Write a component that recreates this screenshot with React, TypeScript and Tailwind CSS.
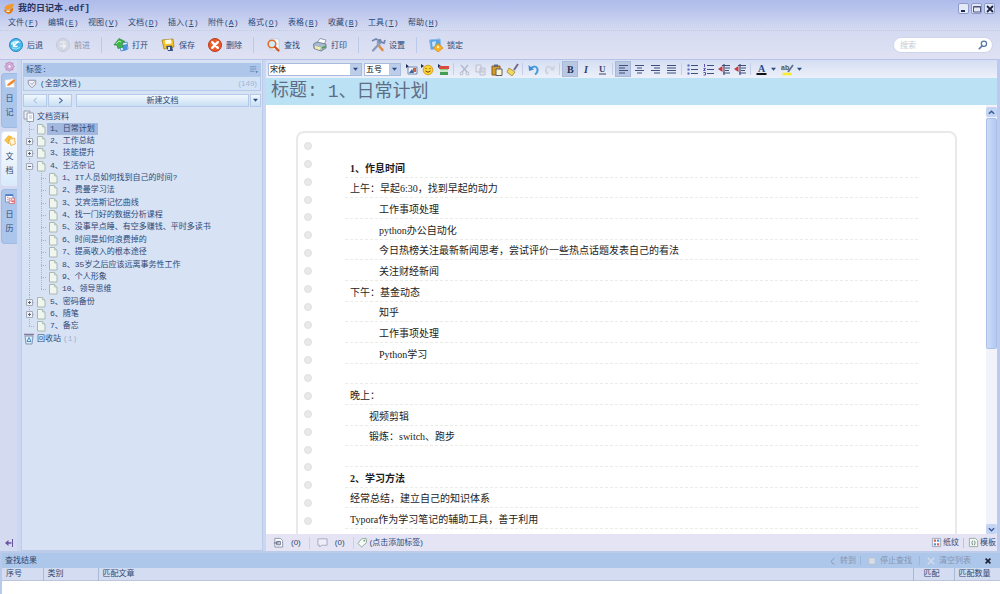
import React from "react";

type IconProps = { children: React.ReactNode; className?: string; box?: number };

function Icon({ children, className = "h-4 w-4", box = 16 }: IconProps) {
  return (
    <svg viewBox={`0 0 ${box} ${box}`} className={`shrink-0 ${className}`} fill="none" aria-hidden="true">
      {children}
    </svg>
  );
}

const menus: [string, string][] = [
  ["文件", "F"], ["编辑", "E"], ["视图", "V"], ["文档", "D"], ["插入", "I"], ["附件", "A"],
  ["格式", "O"], ["表格", "B"], ["收藏", "B"], ["工具", "T"], ["帮助", "H"],
];

function Logo() {
  return (
    <Icon className="h-3 w-3">
      <path d="M2 6 Q5 1 15 1 Q14 6 9 8 L3 9Z" fill="#f29a2e" />
      <path d="M1 9 L9 9 L13 6 Q15 10 10 14 Q4 16 1 9Z" fill="#e07a14" />
      <path d="M4 10 L10 10 L8 12 L5 12Z" fill="#fff3dc" />
    </Icon>
  );
}

const BackIcon = () => (
  <Icon>
    <circle cx="8" cy="8" r="6.5" fill="#45b8ea" stroke="#2b86c4" />
    <path d="M3 6 Q8 1 13 6 Q8 5 3 8Z" fill="#b8ecff" />
    <path d="M10.5 4 L6 8.5 M5.500 5.500 V9.500 H9.500" stroke="#fff" strokeWidth="1.500" />
    <path d="M4 11 Q8 13.500 12 10.500" stroke="#a5e4fa" />
  </Icon>
);
const ForwardIcon = () => (
  <Icon>
    <circle cx="8" cy="8" r="6.5" fill="#d3d7e3" stroke="#c3c9d9" />
    <path d="M3.500 6.500 Q8 1.500 12.500 6.500 Q8 5 3.500 6.500Z" fill="#e9ebf2" />
    <path d="M5 9 H10.500 M8 6.500 L10.500 9 L8 11.500" stroke="#eef0f6" strokeWidth="1.400" />
  </Icon>
);
const OpenIcon = () => (
  <Icon>
    <path d="M6 7 L14 5 L15 12 L8 14Z" fill="#f4f8ff" stroke="#5a8fd0" />
    <path d="M9 8 L14 7 L14 13 L10 14Z" fill="#4b93dc" />
    <path d="M1 8 L6 1.500 L12 4.500 L9 6 L10 10 L5 11.500 L4 8Z" fill="#3fb54c" stroke="#27853a" strokeWidth=".7" />
    <path d="M3 7 L6 4 L8 5" stroke="#b5efae" />
  </Icon>
);
const SaveIcon = () => (
  <Icon>
    <path d="M2 3 L13 2 L14 10 L4 12Z" fill="#f6c52c" stroke="#9a7a20" strokeWidth=".7" />
    <path d="M5 3 L11 2.5 L11.5 6.5 L5.5 7Z" fill="#fffbe0" />
    <path d="M6 9 L12 8.5 L13 14 L8 14Z" fill="#39507e" />
    <path d="M8 10 H10 V13 H8Z" fill="#dce6f6" />
  </Icon>
);
const DeleteIcon = () => (
  <Icon>
    <circle cx="8" cy="8" r="6.5" fill="#ea5a2a" stroke="#bd3a18" />
    <path d="M5.2 5.2 L10.8 10.8 M10.8 5.2 L5.2 10.8" stroke="#fff" strokeWidth="2.4" strokeLinecap="round" />
  </Icon>
);
const FindIcon = () => (
  <Icon>
    <path d="M5 2 H14 V13 H5Z" fill="#fbfcff" stroke="#bcc6dc" strokeWidth=".8" />
    <circle cx="7" cy="7" r="3.8" fill="#d3ecfb" stroke="#e2702a" strokeWidth="1.6" />
    <path d="M10 10 L13.5 13.5" stroke="#d0561f" strokeWidth="2.3" strokeLinecap="round" />
  </Icon>
);
const PrintIcon = () => (
  <Icon>
    <path d="M5 6 L8 1.5 L14 3 L12 8Z" fill="#fff" stroke="#7889a4" strokeWidth=".8" />
    <path d="M1.5 7 L5 5 L14 7 V11 L9 14 L2 11.5Z" fill="#a9bacd" stroke="#5e7288" strokeWidth=".8" />
    <path d="M3 9 L9 10.5 L8 13 L3 11.5Z" fill="#f7ee9c" />
    <path d="M10 11 L14 9.5" stroke="#48a04f" strokeWidth="1.5" />
  </Icon>
);
const SettingsIcon = () => (
  <Icon>
    <path d="M3 13.5 L11 5" stroke="#8499ba" strokeWidth="2.2" strokeLinecap="round" />
    <path d="M10 2 L11 5 L14 6 L15 3 M2 4 L6 2 L10 4 L7 5.5" stroke="#7188ad" strokeWidth="1.8" />
    <path d="M7 6 L10 9" stroke="#8fa3c0" strokeWidth="2" />
    <path d="M9.5 9.5 L12.5 13" stroke="#e08c42" strokeWidth="2.6" strokeLinecap="round" />
  </Icon>
);
const LockIcon = () => (
  <Icon>
    <path d="M1.5 3 L12 2 L13 11 L3 12.5Z" fill="#58a3e6" stroke="#8bb9e8" />
    <path d="M4 5 L8 4 L7 9 L4.500 10Z" fill="#c8e5fb" />
    <path d="M10 6.500 L15 11 L10 15 L5.500 11Z" fill="#f9b526" stroke="#e08b16" strokeWidth=".8" />
    <circle cx="10" cy="10" r="1.2" fill="#fff0b0" />
  </Icon>
);

const tools = [
  { label: "后退", icon: <BackIcon /> },
  { label: "前进", icon: <ForwardIcon />, off: true },
  null,
  { label: "打开", icon: <OpenIcon /> },
  { label: "保存", icon: <SaveIcon /> },
  { label: "删除", icon: <DeleteIcon /> },
  null,
  { label: "查找", icon: <FindIcon /> },
  { label: "打印", icon: <PrintIcon /> },
  null,
  { label: "设置", icon: <SettingsIcon /> },
  null,
  { label: "锁定", icon: <LockIcon /> },
];

function Header() {
  const winBtn = "flex h-[11px] w-[11px] items-center justify-center rounded-[2px] border border-[#8f9cc9] bg-[#e4e9f8]";
  return (
    <header className="shrink-0 border-b border-[#b5c3ea] bg-linear-to-b from-[#aebaea] via-[#d3daf1] to-[#e0e2f3] pt-[2px]">
      <div className="flex h-[13px] items-center gap-[3px] pr-[5px] pl-[3px]">
        <Logo />
        <h1 className="flex-1 text-[9px] leading-3 font-bold text-[#26355f]">我的日记本.edf]</h1>
        <div className="flex gap-[2px]">
          <button aria-label="最小化" className={winBtn}>
            <Icon box={8} className="h-2 w-2"><path d="M1 6 H5" stroke="#1f2a52" strokeWidth="2" /></Icon>
          </button>
          <button aria-label="最大化" className={winBtn}>
            <Icon box={8} className="h-2 w-2"><path d="M.5 1.500 H7.500 V7 H.5Z M.5 2 H7.500" stroke="#4a5378" /></Icon>
          </button>
          <button aria-label="关闭" className={winBtn}>
            <Icon box={8} className="h-2 w-2"><path d="M1 1 L7 7 M7 1 L1 7" stroke="#1c2444" strokeWidth="1.8" /></Icon>
          </button>
        </div>
      </div>
      <nav className="flex h-4 items-center border-b border-dotted border-[#c0c9e6] pl-2">
        {menus.map(([name, key], i) => (
          <button key={i} className="w-10 text-left whitespace-nowrap">
            {name}(<u>{key}</u>)
          </button>
        ))}
      </nav>
      <div className="flex h-7 items-center gap-3 pr-[7px] pl-2">
        {tools.map((t, i) =>
          t ? (
            <button key={i} className={`flex items-center gap-[3px] ${t.off ? "text-[#8b91a6]" : ""}`}>
              {t.icon}
              {t.label}
            </button>
          ) : (
            <span key={i} className="-mx-px h-4 w-px bg-[#bccaea]" />
          )
        )}
        <label className="ml-auto flex h-4 w-[100px] items-center rounded-full border border-[#cdd5ec] bg-white pr-1 pl-[6px]">
          <input aria-label="搜索" placeholder="搜索" className="min-w-0 flex-1 bg-transparent outline-none placeholder:text-[#c5ccd8]" />
          <Icon className="h-[10px] w-[10px]">
            <circle cx="9.500" cy="6" r="4.200" stroke="#5779a8" strokeWidth="2" />
            <path d="M6.500 9.500 L2 14" stroke="#5779a8" strokeWidth="2.600" strokeLinecap="round" />
          </Icon>
        </label>
      </div>
    </header>
  );
}

function Rail() {
  const tab = "flex h-[55px] w-full flex-col items-center rounded-l border border-r-0 pt-[3px]";
  const glyphs = "mt-[3px] w-2 text-center text-[8px] leading-[14px]";
  return (
    <nav className="flex w-[17px] shrink-0 flex-col items-center bg-[#d4daf0] pl-px">
      <Icon className="my-px h-[11px] w-[11px]">
        <path d="M8 1 L10 3 L13 3 L13 6 L15 8 L13 10 L13 13 L10 13 L8 15 L6 13 L3 13 L3 10 L1 8 L3 6 L3 3 L6 3Z" fill="#d8b0dc" stroke="#a878b4" />
        <circle cx="8" cy="8" r="3" fill="#f1dcf2" stroke="#b48abf" />
      </Icon>
      <div className="flex w-full flex-col gap-[3px]">
        <button className={`${tab} border-[#9fbbe4] bg-[#abc6ea]`}>
          <Icon className="h-3 w-3">
            <path d="M1 4 L13 2 L14 14 L2 14Z" fill="#fbfbfd" stroke="#c3cbdb" />
            <path d="M4 11 Q5 8 14 3 L15 5 Q10 11 5 12Z" fill="#ef8a2c" />
          </Icon>
          <span className={glyphs}>日记</span>
        </button>
        <button className={`${tab} border-[#dfeafa] bg-linear-to-b from-white to-[#d8eafa]`}>
          <Icon className="h-3 w-3">
            <path d="M1 7 L6 1 L11 3 L6 6 L6 12Z" fill="#f9c838" stroke="#e39b18" strokeWidth=".8" />
            <path d="M7 6 L14 4 L15 12 L9 14Z" fill="#fff6dc" stroke="#e5a02c" />
          </Icon>
          <span className={glyphs}>文档</span>
        </button>
        <button className={`${tab} border-[#9fbbe4] bg-[#abc6ea]`}>
          <Icon className="h-3 w-3">
            <path d="M2 2 H12 V12 H2Z" fill="#f6f9ff" stroke="#5d86c6" />
            <path d="M2 3 H12" stroke="#4c7bc4" strokeWidth="2" />
            <path d="M7 7 H14 V14 H7Z" fill="#fff" stroke="#d1606a" />
            <path d="M10 8 L9 11 H13 M12 9 V13" stroke="#d83a3a" />
            <path d="M4 6 H6 M4 9 H6" stroke="#d66" />
          </Icon>
          <span className={glyphs}>日历</span>
        </button>
      </div>
      <button aria-label="收起" className="mt-auto mb-[3px]">
        <Icon box={10} className="h-[10px] w-[10px]">
          <path d="M8.500 1 V9" stroke="#6a549e" />
          <path d="M7.500 5 H3" stroke="#6a549e" strokeWidth="1.500" />
          <path d="M1 5 L4.500 2 V8Z" fill="#6a549e" />
        </Icon>
      </button>
    </nav>
  );
}

type Node = { text: string; level: number; mark?: "plus" | "minus" | "end" | "last"; on?: boolean };
const nodes: Node[] = [
  { text: "1、日常计划", level: 1, on: true },
  { text: "2、工作总结", level: 1, mark: "plus" },
  { text: "3、技能提升", level: 1, mark: "plus" },
  { text: "4、生活杂记", level: 1, mark: "minus" },
  { text: "1、IT人员如何找到自己的时间?", level: 2 },
  { text: "2、费曼学习法", level: 2 },
  { text: "3、艾宾浩斯记忆曲线", level: 2 },
  { text: "4、找一门好的数据分析课程", level: 2 },
  { text: "5、没事早点睡、有空多赚钱、平时多读书", level: 2 },
  { text: "6、时间是如何浪费掉的", level: 2 },
  { text: "7、提高收入的根本途径", level: 2 },
  { text: "8、35岁之后应该远离事务性工作", level: 2 },
  { text: "9、个人形象", level: 2 },
  { text: "10、领导思维", level: 2, mark: "end" },
  { text: "5、密码备份", level: 1, mark: "plus" },
  { text: "6、随笔", level: 1, mark: "plus" },
  { text: "7、备忘", level: 1, mark: "last" },
];

function Branch({ mark, pass }: { mark?: string; pass?: boolean }) {
  const end = mark === "end" || mark === "last";
  return (
    <Icon box={12} className="h-3 w-3 overflow-visible">
      <path d={end ? "M6.500 -1 V6" : "M6.500 -1 V13"} stroke="#a9b4c6" strokeDasharray="1 1" />
      {!pass && <path d="M6 6.500 H12" stroke="#a9b4c6" strokeDasharray="1 1" />}
      {(mark === "plus" || mark === "minus") && (
        <>
          <path d="M3.500 3.500 H9.500 V9.500 H3.500Z" fill="#eef2f6" stroke="#a3abb8" />
          <path d={mark === "plus" ? "M5 6.500 H8 M6.500 5 V8" : "M5 6.500 H8"} stroke="#5a667a" />
        </>
      )}
    </Icon>
  );
}

function PageIcon() {
  return (
    <Icon box={12} className="h-3 w-3">
      <path d="M2.500 1.500 H7.500 L10 4 V11 H2.500Z" fill="#f0f6ee" stroke="#a7b8b2" />
      <path d="M7.500 1.500 V4 H10" fill="#c9dccb" stroke="#a7b8b2" strokeWidth=".7" />
    </Icon>
  );
}

function Caret() {
  return <Icon box={6} className="h-[5px] w-[5px]"><path d="M0 1 H6 L3 4.500Z" fill="#294a82" /></Icon>;
}

function Sidebar() {
  const btn = "flex items-center justify-center border border-[#b5c9e8] bg-linear-to-b from-[#f2f8fd] to-[#c9dff4]";
  return (
    <aside className="mr-[3px] ml-1 flex w-[242px] shrink-0 flex-col border border-t-0 border-[#bccbea] bg-[#d7e2f4] px-px">
      <div className="mt-[3px] flex h-[13px] items-center justify-between bg-[#adc6e9] pr-[3px] pl-[3px]">
        <h2>标签:</h2>
        <Icon box={10} className="h-[9px] w-[9px]">
          <path d="M1 2 H8 M1 4.500 H8 M1 7 H6" stroke="#6f8fbf" />
          <path d="M7 7 H10 L8.500 9Z" fill="#4c6ea4" />
        </Icon>
      </div>
      <button className="flex h-[15px] items-center gap-[3px] border border-[#b5c9e8] bg-[#d3e2f5] px-[3px]">
        <Icon className="h-[10px] w-[10px]">
          <path d="M2 2 H14 V8 L8 14 L2 8Z" fill="#f2f2f8" stroke="#7d7f9e" strokeWidth="1.300" />
          <path d="M5 6 L8 9 L12 4" stroke="#8d8fae" strokeWidth="1.200" />
        </Icon>
        <span>(全部文档)</span>
        <span className="ml-auto font-['Liberation_Sans'] text-[#a4b8da]">(149)</span>
      </button>
      <div className="mt-[3px] flex h-[13px] gap-px">
        <button aria-label="上一个" className={`${btn} w-6`}>
          <Icon box={8} className="h-[7px] w-[7px]"><path d="M5.500 1 L2 4 L5.500 7" stroke="#92acd2" /></Icon>
        </button>
        <button aria-label="下一个" className={`${btn} mr-[3px] w-6`}>
          <Icon box={8} className="h-[7px] w-[7px]"><path d="M2.500 1 L6 4 L2.500 7" stroke="#4a6797" strokeWidth="1.200" /></Icon>
        </button>
        <button className={`${btn} flex-1`}>新建文档</button>
        <button aria-label="新建选项" className={`${btn} w-[11px]`}><Caret /></button>
      </div>
      <ul className="mt-[3px] grid h-[235px] auto-rows-fr">
        <li>
          <button className="flex h-full items-center gap-[2px]">
            <Icon box={12} className="h-3 w-3">
              <path d="M1 1 H7 V9 H1Z" fill="#eef2f6" stroke="#95a1b4" />
              <path d="M4 3 H10.500 V11.500 H4Z" fill="#f8fafb" stroke="#95a1b4" />
              <path d="M6 6 H9 M6 8 H9" stroke="#b8c2ce" />
            </Icon>
            文档资料
          </button>
        </li>
        {nodes.map((n, i) => (
          <li key={i}>
            <button className="flex h-full items-center whitespace-nowrap">
              {n.level === 2 && <Branch pass />}
              <Branch mark={n.mark} />
              <PageIcon />
              <span className={`px-[3px] leading-3 ${n.on ? "bg-[#a3b8de]" : ""}`}>{n.text}</span>
            </button>
          </li>
        ))}
        <li>
          <button className="flex h-full items-center gap-[2px]">
            <Icon box={12} className="h-3 w-3">
              <path d="M1 1.500 H11" stroke="#85789c" strokeWidth="1.500" />
              <path d="M2 3 H10 L9 11 H3Z" fill="#dceaf6" stroke="#8297b6" />
              <path d="M6 4.500 L8 8.500 H4Z" stroke="#4b92cf" />
            </Icon>
            回收站 <span className="text-[#a3b0c8]">(1)</span>
          </button>
        </li>
      </ul>
    </aside>
  );
}

function Picker({ label, value, width }: { label: string; value: string; width: string }) {
  return (
    <div className={`relative h-[13px] border border-[#a9bcdf] bg-white ${width}`}>
      <select aria-label={label} className="block h-full w-full appearance-none pl-px leading-[11px] text-black outline-none">
        <option>{value}</option>
      </select>
      <span className="pointer-events-none absolute inset-y-0 right-0 flex w-[11px] items-center justify-center bg-[#bccde9]">
        <Caret />
      </span>
    </div>
  );
}

const ink = "#3f4f7a";
const lines = (spans: string) => <path d={spans} stroke={ink} strokeWidth="1.200" />;
const indentArt = (
  <>
    {lines("M4 2.500 H12 M7 5 H12 M7 7.500 H11 M5 10 H12 M6 1 V12")}
    <path d="M0 6 L4.500 3 V9Z" fill="#c33a40" />
  </>
);
const formatGroups: { name: string; art: React.ReactNode; on?: boolean }[][] = [
  [
    { name: "插入图片", art: <><path d="M1 1 L4 3.500 L1 5Z" fill="#1e2b55" /><path d="M3 4 H12 V11 H3Z" fill="#f1f5fb" stroke="#7487a8" /><path d="M4 10 L7 6 L9 10Z" fill="#3a63a8" /><path d="M8 5 H11 V9 H8Z" fill="#c86040" /></> },
    { name: "表情", art: <><path d="M0 1 L3 3 L0 5Z" fill="#1e2b55" /><circle cx="7" cy="7" r="4.800" fill="#fbd235" stroke="#cf9415" strokeWidth=".8" /><path d="M5 5 V6 M9 5 V6 M4.500 8 Q7 10.500 9.500 8" stroke="#70480c" /></> },
    { name: "插入表格", art: <><path d="M1 1 L4 3 L1 5Z" fill="#1e2b55" /><path d="M2 3 H12 V6 H2Z" fill="#db4a3b" /><path d="M3 6 H11 V9 H3Z" fill="#8ed08a" /><path d="M3 9 H11 V12 H3Z" fill="#459d55" /><path d="M3 8 H11" stroke="#fff" /></> },
  ],
  [
    { name: "剪切", art: <><path d="M3 2 L9 9 M10 2 L4 9" stroke="#b1b7c8" strokeWidth="1.200" /><circle cx="3.500" cy="10.500" r="1.500" stroke="#b1b7c8" /><circle cx="9.500" cy="10.500" r="1.500" stroke="#b1b7c8" /></> },
    { name: "复制", art: <path d="M2 2 H7 V9 H2Z M6 5 H11 V12 H6Z M7.500 7 H10 M7.500 9 H10" fill="#e5e8f0" stroke="#b9bfcf" /> },
    { name: "粘贴", art: <><path d="M2 3 H10 V12 H2Z" fill="#d69c2a" stroke="#875d19" /><path d="M4 1.500 H8 V4 H4Z" fill="#5f6780" /><path d="M6 6 H12 V12.500 H6Z" fill="#fff6c8" stroke="#585f79" /></> },
    { name: "格式刷", art: <><path d="M12 1 L8 7" stroke="#766a8c" strokeWidth="2" /><path d="M3 5 L9 9 L6 13 L1 9Z" fill="#f2d95a" stroke="#97843b" strokeWidth=".8" /></> },
  ],
  [
    { name: "撤销", art: <><path d="M3.500 5.500 Q9 1.500 10.500 6 Q11 9.500 8 11.500" stroke="#4a9ade" strokeWidth="2" /><path d="M1.500 2 L2 8 L7 6.500Z" fill="#3e8dd5" /></> },
    { name: "重做", art: <><path d="M9.500 5.500 Q4 1.500 3 6 Q2 9 5 11" stroke="#cdd2df" strokeWidth="1.800" /><path d="M12 2 L11 8 L7 6.500Z" fill="#cdd2df" /></> },
  ],
  [
    { name: "加粗", on: true, art: <text x="3" y="10" fontSize="10" fontWeight="bold" fontFamily="Liberation Serif, serif" fill="#25315a">B</text> },
    { name: "斜体", art: <text x="4" y="10" fontSize="10" fontWeight="bold" fontStyle="italic" fontFamily="Liberation Serif, serif" fill="#2f3d68">I</text> },
    { name: "下划线", art: <><text x="3" y="9" fontSize="9" fontWeight="bold" fontFamily="Liberation Serif, serif" fill="#3a4770">U</text><path d="M3 11 H10" stroke="#3a4770" /></> },
  ],
  [
    { name: "左对齐", on: true, art: lines("M2 2.500 H11 M2 5 H8 M2 7.500 H11 M2 10 H8") },
    { name: "居中", art: lines("M2 2.500 H11 M4 5 H9 M2 7.500 H11 M4 10 H9") },
    { name: "右对齐", art: lines("M2 2.500 H11 M5 5 H11 M2 7.500 H11 M5 10 H11") },
    { name: "两端对齐", art: lines("M2 2.500 H11 M2 5 H11 M2 7.500 H11 M2 10 H11") },
  ],
  [
    { name: "项目符号", art: <>{lines("M5 2.500 H12 M5 6.500 H12 M5 10.500 H12")}<path d="M1.500 1.500 H3.500 V3.500 H1.500Z M1.500 5.500 H3.500 V7.500 H1.500Z M1.500 9.500 H3.500 V11.500 H1.500Z" fill="#4a5cb4" /></> },
    { name: "编号", art: <>{lines("M5 2.500 H12 M5 6.500 H12 M5 10.500 H12")}<path d="M2.500 1 V4 M1.500 5.500 H3.500 L1.500 7.500 H3.500 M1.500 9.500 H3.500 V12 H1.500" stroke="#5a52aa" /></> },
    { name: "减少缩进", art: indentArt },
    { name: "增加缩进", art: indentArt },
  ],
];

function FormatBar() {
  return (
    <div className="flex h-[18px] shrink-0 items-center bg-linear-to-b from-[#d5def2] to-[#edf0fa] pl-[2px]">
      <Picker label="字体" value="宋体" width="w-[94px]" />
      <div className="ml-[2px]"><Picker label="字号" value="五号" width="w-[37px]" /></div>
      <div className="ml-[2px] flex items-center">
        {formatGroups.map((group, g) => (
          <React.Fragment key={g}>
            {group.map((b) => (
              <button key={b.name} aria-label={b.name} className={`flex h-4 w-4 items-center justify-center border ${b.on ? "border-[#a9b9da] bg-[#bac7e2]" : "border-transparent"}`}>
                <Icon box={13} className="h-[13px] w-[13px]">{b.art}</Icon>
              </button>
            ))}
            <span className="mx-[2px] h-3 w-px bg-[#c3cfea]" />
          </React.Fragment>
        ))}
        <button aria-label="字体颜色" className="flex items-center gap-[3px] pl-[2px]">
          <Icon box={13} className="h-[13px] w-[13px]">
            <text x="3" y="9" fontSize="10" fontWeight="bold" fontFamily="Liberation Serif, serif" fill="#2b4a86">A</text>
            <path d="M1.500 11 H11.500" stroke="#111" strokeWidth="2" />
          </Icon>
          <Caret />
        </button>
        <button aria-label="突出显示" className="ml-[5px] flex items-center gap-[3px]">
          <Icon box={13} className="h-[13px] w-[13px]">
            <text x="0" y="7" fontSize="7" fontWeight="bold" fontFamily="Liberation Sans, sans-serif" fill="#5c5a1c">ab</text>
            <path d="M12 2 L7 9" stroke="#5d7298" strokeWidth="1.800" />
            <path d="M1.500 11 H11" stroke="#f8ee2c" strokeWidth="2.500" />
          </Icon>
          <Caret />
        </button>
      </div>
    </div>
  );
}

type Line = { text: string; indent?: "wide" | "mid"; bold?: boolean };
const body: Line[] = [
  { text: "1、作息时间", bold: true },
  { text: "上午：早起6:30，找到早起的动力" },
  { text: "工作事项处理", indent: "wide" },
  { text: "python办公自动化", indent: "wide" },
  { text: "今日热榜关注最新新闻思考，尝试评价一些热点话题发表自己的看法", indent: "wide" },
  { text: "关注财经新闻", indent: "wide" },
  { text: "下午：基金动态" },
  { text: "知乎", indent: "wide" },
  { text: "工作事项处理", indent: "wide" },
  { text: "Python学习", indent: "wide" },
  { text: "" },
  { text: "晚上：" },
  { text: "视频剪辑", indent: "mid" },
  { text: "锻炼：switch、跑步", indent: "mid" },
  { text: "" },
  { text: "2、学习方法", bold: true },
  { text: "经常总结，建立自己的知识体系" },
  { text: "Typora作为学习笔记的辅助工具，善于利用" },
];
const pads = { wide: "pl-[34px]", mid: "pl-6", none: "pl-[5px]" };

function ScrollBar() {
  const b = "flex h-[10px] w-full items-center justify-center rounded-[2px] bg-[#c2d5f4]";
  return (
    <div className="flex w-[11px] shrink-0 flex-col bg-[#f2f2fa] pt-[2px]">
      <button aria-label="向上滚动" className={b}>
        <Icon box={8} className="h-[7px] w-[7px]"><path d="M1 5.500 L4 2.500 L7 5.500" stroke="#3d5c98" strokeWidth="1.700" /></Icon>
      </button>
      <div className="my-px flex-1">
        <div className="h-[57%] rounded-[2px] border border-[#a9c0ea] bg-linear-to-r from-[#cbdbf8] to-[#b4caf2]" />
      </div>
      <button aria-label="向下滚动" className={b}>
        <Icon box={8} className="h-[7px] w-[7px]"><path d="M1 2.500 L4 5.500 L7 2.500" stroke="#3d5c98" strokeWidth="1.700" /></Icon>
      </button>
    </div>
  );
}

function Editor() {
  return (
    <main className="flex min-w-0 flex-1 flex-col">
      <FormatBar />
      <div className="flex h-[27px] shrink-0 items-center gap-[10px] bg-[#bae1f4] pl-[5px] font-['Liberation_Mono','Noto_Sans_CJK_SC',monospace] text-[18px] text-[#5f6c86]">
        <label htmlFor="doc-title">标题:</label>
        <input id="doc-title" defaultValue="1、日常计划" className="h-6 min-w-0 flex-1 bg-transparent leading-6 outline-none" />
      </div>
      <div className="flex min-h-0 flex-1 bg-white">
        <div className="min-w-0 flex-1 overflow-hidden pt-[26px] pr-[29px] pl-[30px]">
          <article className="flex items-start rounded-lg border-2 border-[#e9e9eb] pb-40">
            <div className="mt-1 grid h-[393px] w-5 auto-rows-fr place-items-center">
              {Array.from({ length: 22 }, (_, i) => (
                <span key={i} className="h-2 w-2 rounded-full border border-[#e0e0e0] bg-[#e9e9e9]" />
              ))}
            </div>
            <div className="mt-6 mr-[37px] ml-[27px] grid h-[372px] min-w-0 flex-1 auto-rows-fr font-['Liberation_Serif','Noto_Sans_CJK_SC',serif] text-[10px] text-[#1c1c1c]">
              {body.map((l, i) => (
                <p key={i} className={`flex items-end border-b border-dashed border-[#ecece6] leading-4 whitespace-nowrap ${pads[l.indent ?? "none"]} ${l.bold ? "font-bold" : ""}`}>
                  {l.text}
                </p>
              ))}
            </div>
          </article>
        </div>
        <ScrollBar />
      </div>
      <div className="flex h-[17px] shrink-0 items-center bg-[#e4e4f5] pr-px pl-[7px]">
        <button className="flex items-center gap-[7px]">
          <Icon box={12} className="h-[11px] w-[11px]">
            <path d="M2 1.500 H8 L10.500 4 V11 H2Z" fill="#fff" stroke="#8b90a6" />
            <path d="M1 6.500 H7 M4 4.800 H8 V8.500 H4Z" stroke="#5e6680" />
          </Icon>
          <span className="font-['Liberation_Sans']">(0)</span>
        </button>
        <span className="mr-[7px] ml-2 h-3 w-px bg-[#cbd0e9]" />
        <button className="flex items-center gap-[7px]">
          <Icon box={12} className="h-[11px] w-[11px]">
            <path d="M1 2 H11 V9 H5 L3 11 V9 H1Z" fill="#eeeef8" stroke="#a3a8c2" />
          </Icon>
          <span className="font-['Liberation_Sans']">(0)</span>
        </button>
        <span className="mr-[3px] ml-2 h-3 w-px bg-[#cbd0e9]" />
        <button className="flex items-center gap-[2px]">
          <Icon box={12} className="h-[11px] w-[11px]">
            <path d="M5 2 L10 1.500 L10.500 6 L5 11 L1 7Z" fill="#f6faf4" stroke="#8fa49b" />
            <circle cx="8" cy="4" r="1" fill="#7b998a" />
          </Icon>
          <span className="font-['Liberation_Sans','Noto_Sans_CJK_SC',sans-serif]">(点击添加标签)</span>
        </button>
        <button className="ml-auto flex items-center gap-px">
          <Icon box={12} className="h-[11px] w-[11px]">
            <path d="M1.500 1.500 H10.500 V10.500 H1.500Z" fill="#fff" stroke="#96a7b4" />
            <path d="M3 4 H5.500 M6.500 8 H9" stroke="#db6059" strokeWidth="2.400" />
            <path d="M6.500 4 H9 M3 8 H5.500" stroke="#5a8edb" strokeWidth="2.400" />
          </Icon>
          纸纹
        </button>
        <span className="mx-1 h-[10px] w-px bg-[#b9c4e6]" />
        <button className="flex items-center gap-px">
          <Icon box={12} className="h-[11px] w-[11px]">
            <path d="M1.500 1.500 H8 L10.500 4 V10.500 H1.500Z" fill="#f6faf5" stroke="#93a89b" />
            <path d="M5 4 Q3.500 6 5 9 M7 4 Q8.500 6 7 9" stroke="#657f76" />
          </Icon>
          模板
        </button>
      </div>
    </main>
  );
}

function Results() {
  const th = "border-r border-[#a9b9d8] p-0 text-left font-normal";
  return (
    <section className="flex h-[41px] shrink-0 flex-col border-l-2 border-[#b9c9ec] bg-white">
      <div className="flex h-[15px] shrink-0 items-center bg-[#adc7ea] pr-2 pl-[3px]">
        <h2 className="flex-1">查找结果</h2>
        <div className="flex items-center gap-1 text-[#8795b0]">
          <button className="flex items-center gap-[3px]">
            <Icon box={10} className="h-2 w-2"><path d="M7 1 L3 5 Q3 9 7 9" stroke="#8c9ab6" strokeWidth="1.200" /></Icon>转到
          </button>
          <span className="h-[9px] w-px bg-[#9ab6de]" />
          <button className="ml-[3px] flex items-center gap-1">
            <Icon box={10} className="h-2 w-2"><path d="M1 1 H9 V9 H1Z" fill="#d8dde6" stroke="#b6bfcd" /></Icon>停止查找
          </button>
          <span className="ml-[3px] h-[9px] w-px bg-[#9ab6de]" />
          <button className="ml-[3px] flex items-center gap-1">
            <Icon box={10} className="h-2 w-2"><path d="M1 1 L9 9 M9 1 L1 9" stroke="#d2dae8" strokeWidth="2" /></Icon>清空列表
          </button>
          <button aria-label="关闭查找结果" className="ml-[9px]">
            <Icon box={10} className="h-2 w-2"><path d="M2 2 L8 8 M8 2 L2 8" stroke="#1c2233" strokeWidth="2" /></Icon>
          </button>
        </div>
      </div>
      <table className="w-full shrink-0 table-fixed border-collapse bg-[#d3dcf0]">
        <thead>
          <tr className="h-3 border-b border-[#bcc5da] leading-[11px]">
            <th className={`${th} w-[41px] pl-1`}>序号</th>
            <th className={`${th} w-[55px] pl-1`}>类别</th>
            <th className={`${th} pl-1`}>匹配文章</th>
            <th className={`${th} w-[41px] pl-[10px]`}>匹配</th>
            <th className="w-[46px] p-0 pl-1 text-left font-normal">匹配数量</th>
          </tr>
        </thead>
      </table>
    </section>
  );
}

export default function App() {
  return (
    <div className="flex h-screen w-full flex-col overflow-hidden bg-[#c9d7f2] font-['Liberation_Mono','Noto_Sans_CJK_SC',monospace] text-[8px] leading-[11px] text-[#2f4874]">
      <Header />
      <div className="flex min-h-0 flex-1 border-r-3 border-[#bccaf0]">
        <Rail />
        <Sidebar />
        <Editor />
      </div>
      <div className="h-[2px] shrink-0 bg-[#bccbea]" />
      <Results />
    </div>
  );
}
